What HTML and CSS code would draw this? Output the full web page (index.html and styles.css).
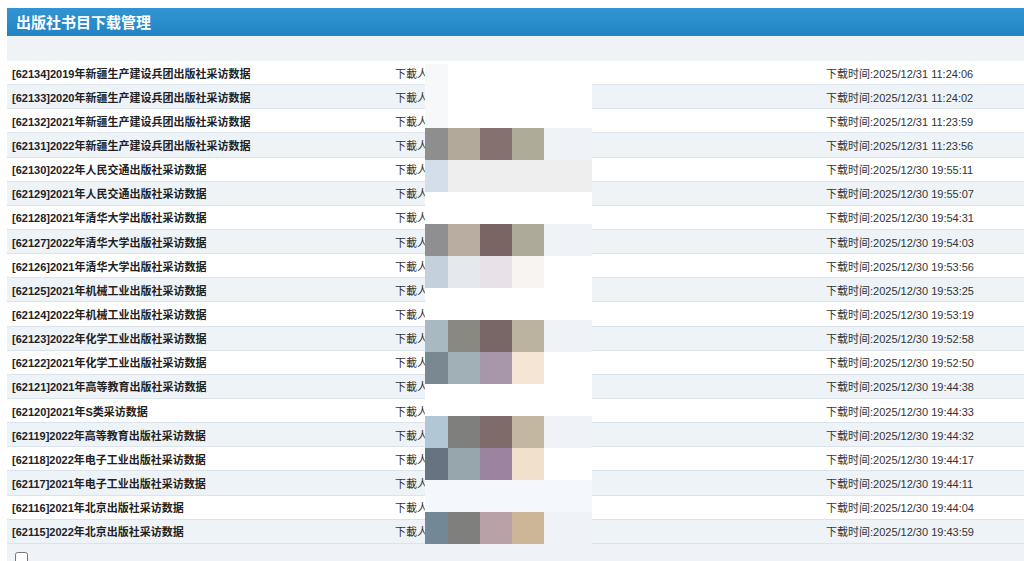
FILE: index.html
```html
<!DOCTYPE html>
<html lang="zh-CN">
<head>
<meta charset="utf-8">
<title>出版社书目下载管理</title>
<link rel="stylesheet" href="styles.css">
</head>
<body>
<div class="page">
  <div class="header">出版社书目下载管理</div>
  <div class="toolbar"></div>
  <div class="list">
    <div class="row"><span class="name">[62134]2019年新疆生产建设兵团出版社采访数据</span><span class="who">下載人</span><span class="time">下载时间:2025/12/31 11:24:06</span></div>
    <div class="row"><span class="name">[62133]2020年新疆生产建设兵团出版社采访数据</span><span class="who">下載人</span><span class="time">下载时间:2025/12/31 11:24:02</span></div>
    <div class="row"><span class="name">[62132]2021年新疆生产建设兵团出版社采访数据</span><span class="who">下載人</span><span class="time">下载时间:2025/12/31 11:23:59</span></div>
    <div class="row"><span class="name">[62131]2022年新疆生产建设兵团出版社采访数据</span><span class="who">下載人</span><span class="time">下载时间:2025/12/31 11:23:56</span></div>
    <div class="row"><span class="name">[62130]2022年人民交通出版社采访数据</span><span class="who">下載人</span><span class="time">下载时间:2025/12/30 19:55:11</span></div>
    <div class="row"><span class="name">[62129]2021年人民交通出版社采访数据</span><span class="who">下載人</span><span class="time">下载时间:2025/12/30 19:55:07</span></div>
    <div class="row"><span class="name">[62128]2021年清华大学出版社采访数据</span><span class="who">下載人</span><span class="time">下载时间:2025/12/30 19:54:31</span></div>
    <div class="row"><span class="name">[62127]2022年清华大学出版社采访数据</span><span class="who">下載人</span><span class="time">下载时间:2025/12/30 19:54:03</span></div>
    <div class="row"><span class="name">[62126]2021年清华大学出版社采访数据</span><span class="who">下載人</span><span class="time">下载时间:2025/12/30 19:53:56</span></div>
    <div class="row"><span class="name">[62125]2021年机械工业出版社采访数据</span><span class="who">下載人</span><span class="time">下载时间:2025/12/30 19:53:25</span></div>
    <div class="row"><span class="name">[62124]2022年机械工业出版社采访数据</span><span class="who">下載人</span><span class="time">下载时间:2025/12/30 19:53:19</span></div>
    <div class="row"><span class="name">[62123]2022年化学工业出版社采访数据</span><span class="who">下載人</span><span class="time">下载时间:2025/12/30 19:52:58</span></div>
    <div class="row"><span class="name">[62122]2021年化学工业出版社采访数据</span><span class="who">下載人</span><span class="time">下载时间:2025/12/30 19:52:50</span></div>
    <div class="row"><span class="name">[62121]2021年高等教育出版社采访数据</span><span class="who">下載人</span><span class="time">下载时间:2025/12/30 19:44:38</span></div>
    <div class="row"><span class="name">[62120]2021年S类采访数据</span><span class="who">下載人</span><span class="time">下载时间:2025/12/30 19:44:33</span></div>
    <div class="row"><span class="name">[62119]2022年高等教育出版社采访数据</span><span class="who">下載人</span><span class="time">下载时间:2025/12/30 19:44:32</span></div>
    <div class="row"><span class="name">[62118]2022年电子工业出版社采访数据</span><span class="who">下載人</span><span class="time">下载时间:2025/12/30 19:44:17</span></div>
    <div class="row"><span class="name">[62117]2021年电子工业出版社采访数据</span><span class="who">下載人</span><span class="time">下载时间:2025/12/30 19:44:11</span></div>
    <div class="row"><span class="name">[62116]2021年北京出版社采访数据</span><span class="who">下載人</span><span class="time">下载时间:2025/12/30 19:44:04</span></div>
    <div class="row"><span class="name">[62115]2022年北京出版社采访数据</span><span class="who">下載人</span><span class="time">下载时间:2025/12/30 19:43:59</span></div>

    <div class="mosaic" aria-hidden="true">
      <i style="background:#f6f8fa"></i><i class="w"></i><i class="w"></i><i class="w"></i><i class="w"></i>
      <i style="background:#f6f8fa"></i><i class="w"></i><i class="w"></i><i class="w"></i><i class="w"></i>
      <i style="background:#8e8e8f"></i><i style="background:#b3a99b"></i><i style="background:#857170"></i><i style="background:#aeab98"></i><i style="background:#eff3f7"></i>
      <i style="background:#d4deea"></i><i style="background:#eeeeee"></i><i style="background:#eeeeee"></i><i style="background:#eeeeee"></i><i style="background:#eeeeee"></i>
      <i class="w"></i><i class="w"></i><i class="w"></i><i class="w"></i><i class="w"></i>
      <i style="background:#8f8f91"></i><i style="background:#b8ada0"></i><i style="background:#7a6562"></i><i style="background:#adaa99"></i><i style="background:#eff3f7"></i>
      <i style="background:#c4d1dd"></i><i style="background:#e4e8ec"></i><i style="background:#e8e2e8"></i><i style="background:#f8f4f1"></i><i class="w"></i>
      <i class="w"></i><i class="w"></i><i class="w"></i><i class="w"></i><i class="w"></i>
      <i style="background:#a8b9c1"></i><i style="background:#89897f"></i><i style="background:#796767"></i><i style="background:#bbb39f"></i><i style="background:#eff3f7"></i>
      <i style="background:#798790"></i><i style="background:#a1afb6"></i><i style="background:#a896aa"></i><i style="background:#f4e5d5"></i><i class="w"></i>
      <i class="w"></i><i class="w"></i><i class="w"></i><i class="w"></i><i class="w"></i>
      <i style="background:#b1c7d6"></i><i style="background:#7f7f7d"></i><i style="background:#806b6b"></i><i style="background:#c3b79f"></i><i style="background:#eff3f7"></i>
      <i style="background:#687382"></i><i style="background:#97a6ad"></i><i style="background:#9c84a0"></i><i style="background:#f1e0cc"></i><i class="w"></i>
      <i style="background:#f4f8fc"></i><i style="background:#f4f8fc"></i><i style="background:#f4f8fc"></i><i style="background:#f4f8fc"></i><i style="background:#f4f8fc"></i>
      <i style="background:#728896"></i><i style="background:#7f7f7d"></i><i style="background:#b9a1a7"></i><i style="background:#cbb797"></i><i style="background:#eff3f7"></i>
    </div>
  </div>
  <div class="footer"><input type="checkbox" class="check"></div>
</div>
</body>
</html>
```

FILE: styles.css
```css
html, body {
  margin: 0;
  padding: 0;
  background: #ffffff;
  overflow: hidden;
}

.page {
  padding: 8px 0 0 7px;
  font-family: "Liberation Sans", Arial, "Noto Sans CJK SC", sans-serif;
  font-size: 11px;
  color: #333333;
}

.header {
  height: 28px;
  line-height: 28px;
  padding-left: 9px;
  background: linear-gradient(#3195d4, #2384c3);
  color: #ffffff;
  font-size: 15px;
  font-weight: bold;
  font-family: "Noto Sans CJK SC", sans-serif;
}

.toolbar {
  height: 25px;
  background: #eff3f7;
}

.list {
  position: relative;
}

.row {
  display: grid;
  grid-template-columns: 383px 431px 1fr;
  align-items: center;
  height: 23.15px;
  padding-left: 5px;
  border-bottom: 1px solid #dbe4ec;
  background: #ffffff;
  white-space: nowrap;
}

.row:nth-child(even) {
  background: #eef3f8;
}

.name {
  font-weight: bold;
  color: #222222;
}

.who,
.time {
  color: #333333;
}

.mosaic {
  position: absolute;
  left: 418px;
  top: 3px;
  display: grid;
  grid-template-columns: 23px 32px 32px 32px 48px;
  grid-auto-rows: 32px;
}

.mosaic i {
  display: block;
}

.mosaic .w {
  background: #ffffff;
}

.footer {
  background: #eff3f7;
  height: 40px;
  padding: 8px 0 0 4px;
}

.check {
  margin: 0 0 0 4px;
  width: 13px;
  height: 13px;
}
```
